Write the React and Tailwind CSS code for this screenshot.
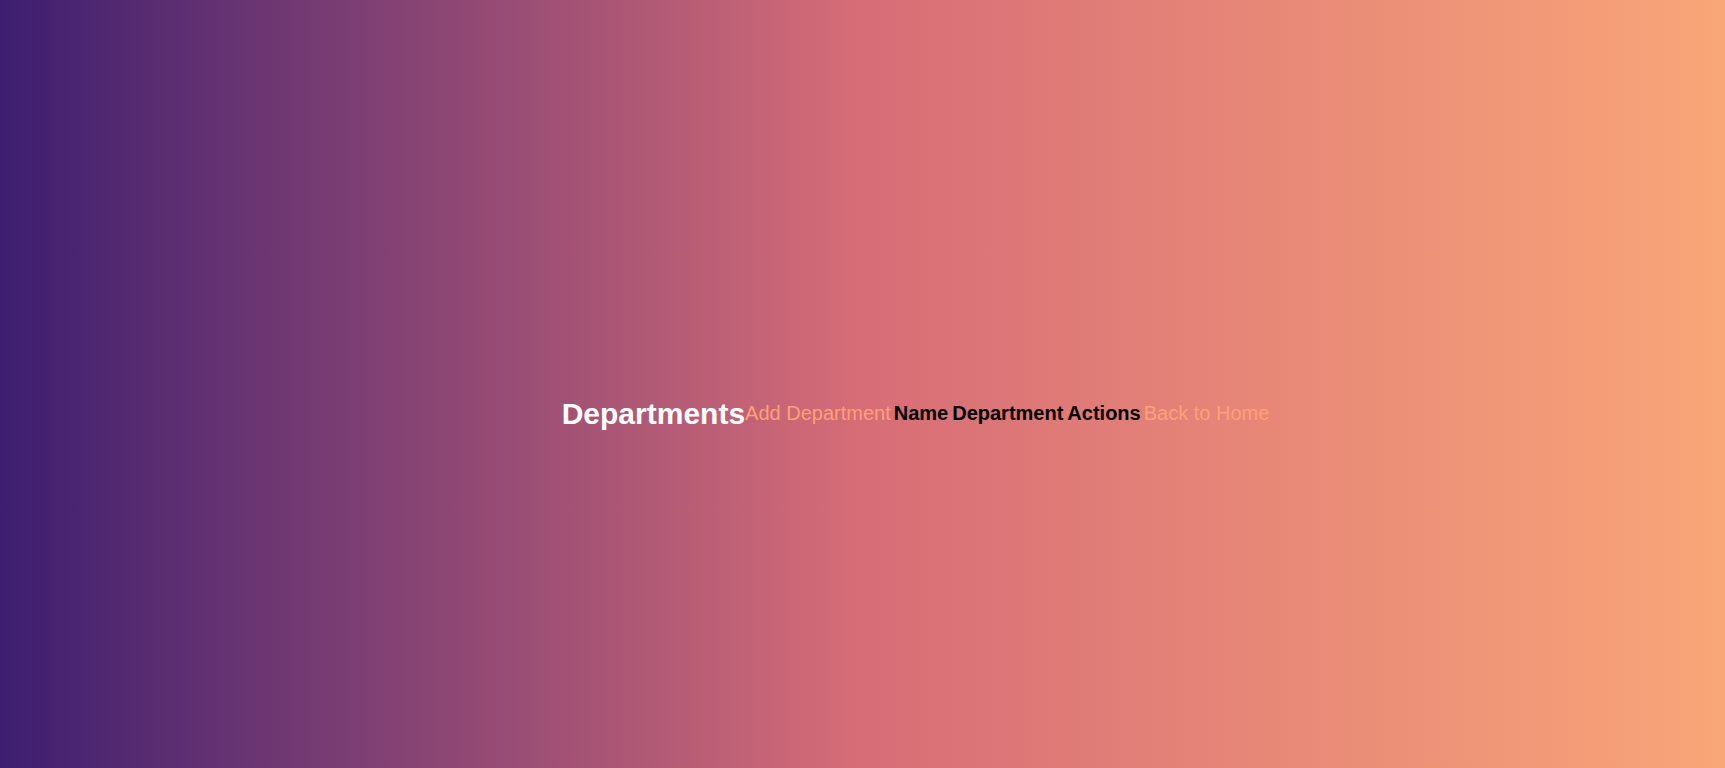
export default function App() {
  return (
    <div
      className="w-full h-[768px] flex items-center justify-center pl-[106px] pt-[58px] bg-[linear-gradient(to_right,#3d1e70,#d76d77,#f9a678)]"
      style={{ fontFamily: '"Liberation Sans", Arial, sans-serif' }}
    >
      <div className="flex items-center">
        <h1 className="text-[30px] font-bold text-white m-0">Departments</h1>
        <a className="text-[20px] text-[#ffa07a]">Add Department</a>
        <div className="flex items-center gap-[4px] px-[3px]">
          <span className="text-[20px] font-bold text-black">Name</span>
          <span className="text-[20px] font-bold text-black">Department</span>
          <span className="text-[20px] font-bold text-black">Actions</span>
        </div>
        <a className="text-[20px] text-[#ffa07a]">Back to Home</a>
      </div>
    </div>
  );
}
